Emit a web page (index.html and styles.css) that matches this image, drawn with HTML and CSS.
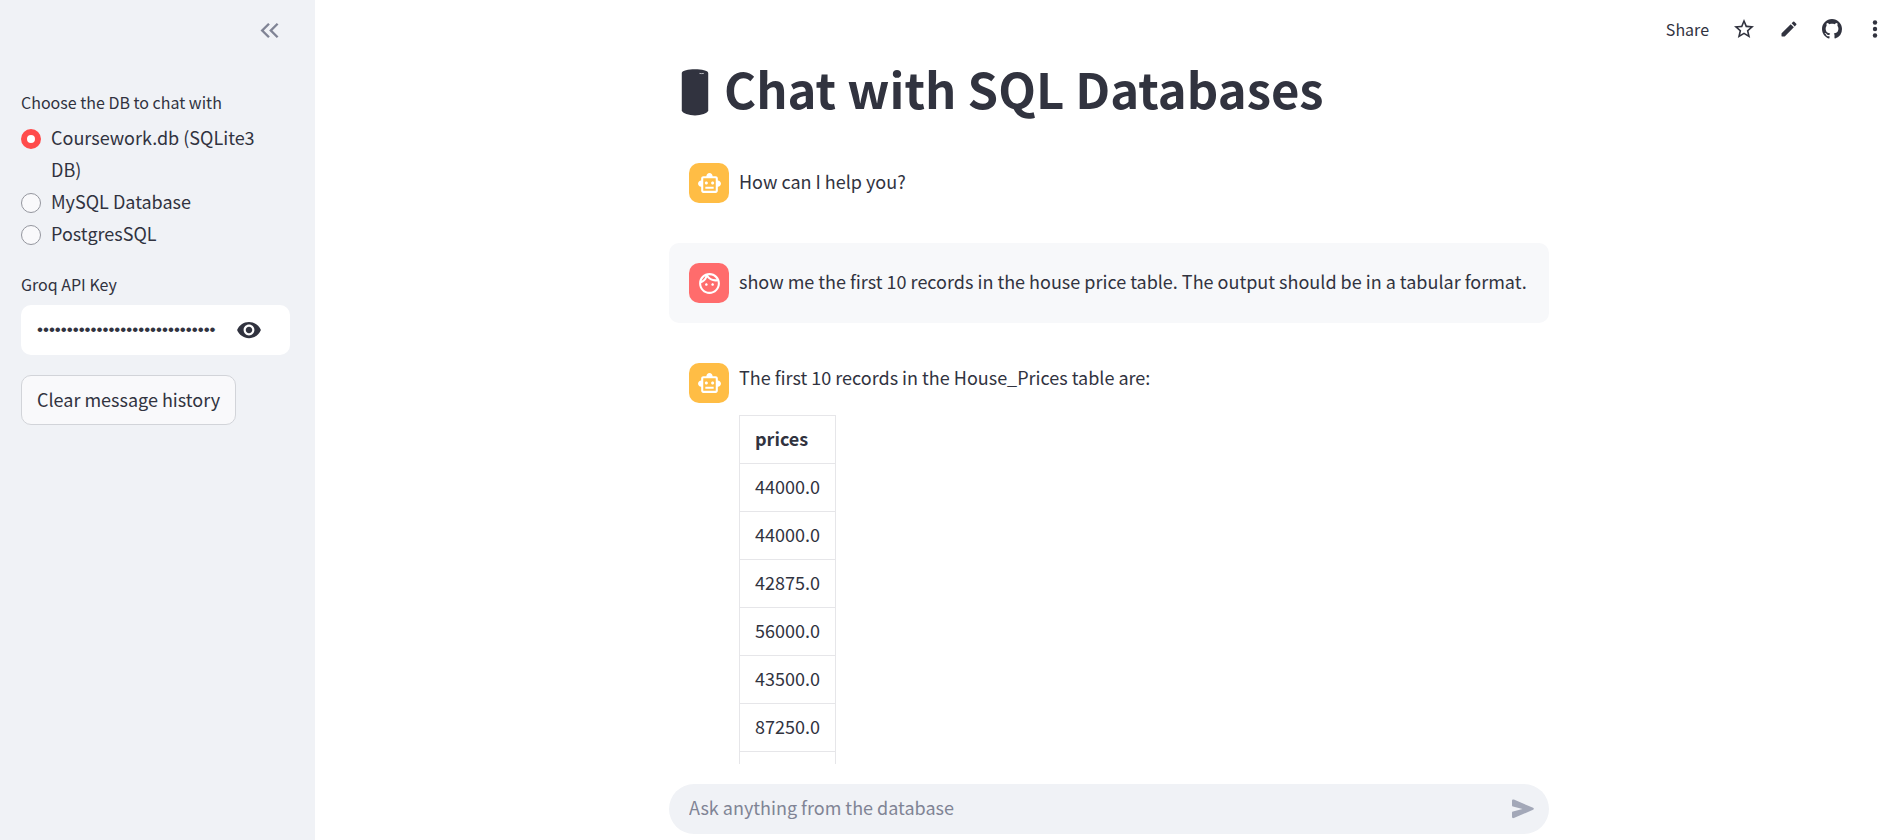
FILE: index.html
```
<!DOCTYPE html>
<html lang="en">
<head>
<meta charset="utf-8">
<title>Chat with SQL Databases</title>
<link rel="stylesheet" href="styles.css">
</head>
<body>
<aside class="sidebar">
  <div class="sidebar-top">
    <button class="icon-button collapse" type="button" aria-label="Collapse sidebar">
      <svg width="25" height="25" viewBox="0 0 24 24" fill="none" stroke="currentColor" stroke-width="2.300"><path d="M11.500 5.500 5 12l6.500 6.500M19.800 5.500 13.300 12l6.500 6.500"/></svg>
    </button>
  </div>
  <fieldset class="radio-group">
    <legend class="label">Choose the DB to chat with</legend>
    <label class="option"><input class="radio" type="radio" name="db" checked><span>Coursework.db (SQLite3 DB)</span></label>
    <label class="option"><input class="radio" type="radio" name="db"><span>MySQL Database</span></label>
    <label class="option"><input class="radio" type="radio" name="db"><span>PostgresSQL</span></label>
  </fieldset>
  <div class="field">
    <label class="label" for="api-key">Groq API Key</label>
    <div class="password-box">
      <input class="password" id="api-key" type="password" value="0000000000000000000000000000000000000000">
      <button class="icon-button" type="button" aria-label="Show password">
        <svg width="26" height="26" viewBox="0 0 24 24" fill="currentColor"><path d="M12 4.500C7 4.500 2.730 7.610 1 12c1.730 4.390 6 7.500 11 7.500s9.270-3.110 11-7.500c-1.730-4.390-6-7.500-11-7.500zM12 17c-2.760 0-5-2.240-5-5s2.240-5 5-5 5 2.240 5 5-2.240 5-5 5zm0-8c-1.660 0-3 1.340-3 3s1.340 3 3 3 3-1.340 3-3-1.340-3-3-3z"/></svg>
      </button>
    </div>
  </div>
  <button class="clear-button" type="button">Clear message history</button>
</aside>

<main class="main">
  <header class="toolbar">
    <button class="share" type="button">Share</button>
    <button class="icon-button" type="button" aria-label="Favorite">
      <svg width="24" height="24" viewBox="0 0 24 24" fill="currentColor"><path d="M22 9.240l-7.190-.620L12 2 9.190 8.630 2 9.240l5.460 4.730L5.820 21 12 17.270 18.180 21l-1.630-7.030L22 9.240zM12 15.400l-3.760 2.270 1-4.280-3.320-2.880 4.380-.380L12 6.100l1.710 4.040 4.380.380-3.320 2.880 1 4.280L12 15.400z"/></svg>
    </button>
    <button class="icon-button" type="button" aria-label="Edit">
      <svg width="20" height="20" viewBox="0 0 24 24" fill="currentColor"><path d="M3 17.460v3.040c0 .28.220.5.500.5h3.040c.13 0 .26-.05.350-.15L17.810 9.940l-3.750-3.750L3.150 17.100c-.1.100-.15.220-.15.360zM20.710 7.040a1 1 0 0 0 0-1.410l-2.340-2.340a1 1 0 0 0-1.410 0l-1.830 1.830 3.750 3.750 1.830-1.830z"/></svg>
    </button>
    <button class="icon-button" type="button" aria-label="View on GitHub">
      <svg width="20" height="20" viewBox="0 0 16 16" fill="currentColor"><path d="M8 0C3.580 0 0 3.580 0 8c0 3.540 2.290 6.530 5.470 7.590.4.070.55-.17.55-.38 0-.19-.01-.82-.01-1.490-2.010.37-2.530-.49-2.690-.94-.09-.23-.48-.94-.82-1.130-.28-.15-.68-.52-.01-.53.63-.01 1.080.58 1.230.82.720 1.210 1.870.87 2.330.66.070-.52.280-.87.510-1.070-1.780-.2-3.640-.89-3.640-3.950 0-.87.310-1.590.82-2.150-.08-.2-.36-1.020.08-2.120 0 0 .67-.21 2.200.82.640-.18 1.320-.27 2-.27s1.360.09 2 .27c1.530-1.040 2.200-.82 2.200-.82.440 1.100.16 1.920.08 2.120.51.560.82 1.270.82 2.150 0 3.070-1.870 3.750-3.650 3.950.29.250.54.730.54 1.480 0 1.070-.01 1.930-.01 2.200 0 .21.150.46.550.38A8.010 8.010 0 0 0 16 8c0-4.420-3.580-8-8-8z"/></svg>
    </button>
    <button class="icon-button" type="button" aria-label="More options">
      <svg width="20" height="20" viewBox="0 0 20 20" fill="currentColor"><circle cx="10" cy="3.500" r="2.200"/><circle cx="10" cy="10" r="2.200"/><circle cx="10" cy="16.500" r="2.200"/></svg>
    </button>
  </header>

  <div class="scroll">
    <div class="column">
      <h1 class="title">
        <svg width="28" height="47" viewBox="0 0 28 48"><path fill="currentColor" d="M.5 4C1 1.500 7 .3 14 .3S27 1.500 27.500 4v38.500C27 45.500 20 47.500 14 47.500S1 45.500.5 42.500z"/><path d="M18.500 4.500q2.500.4 4.500 0" fill="none" stroke="#b9bac0"/></svg>
        <span>Chat with SQL Databases</span>
      </h1>

      <article class="message">
        <div class="avatar bot">
          <svg width="25" height="25" viewBox="0 0 24 24" fill="currentColor"><path d="M20 9V7c0-1.100-.9-2-2-2h-3c0-1.660-1.340-3-3-3S9 3.340 9 5H6c-1.100 0-2 .9-2 2v2c-1.660 0-3 1.340-3 3s1.340 3 3 3v4c0 1.100.9 2 2 2h12c1.100 0 2-.9 2-2v-4c1.660 0 3-1.340 3-3s-1.340-3-3-3zm-2 10H6V7h12v12zm-9-6c-.83 0-1.500-.67-1.500-1.500S8.170 10 9 10s1.500.67 1.500 1.500S9.830 13 9 13zm7.500-1.500c0 .83-.67 1.500-1.500 1.500s-1.500-.67-1.500-1.500.67-1.500 1.500-1.500 1.500.67 1.500 1.500zM8 15h8v2H8v-2z"/></svg>
        </div>
        <div class="content"><p>How can I help you?</p></div>
      </article>

      <article class="message user-message">
        <div class="avatar user">
          <svg width="25" height="25" viewBox="0 0 24 24" fill="currentColor"><path d="M10.250 13c0 .69-.56 1.250-1.250 1.250S7.750 13.690 7.750 13s.56-1.250 1.250-1.250 1.250.56 1.250 1.250zM15 11.750c-.69 0-1.250.56-1.250 1.250s.56 1.250 1.250 1.250 1.250-.56 1.250-1.250-.56-1.250-1.250-1.250zm7 .25c0 5.520-4.480 10-10 10S2 17.520 2 12 6.480 2 12 2s10 4.480 10 10zM10.660 4.120C12.060 6.440 14.600 8 17.500 8c.46 0 .91-.05 1.340-.12C17.440 5.560 14.900 4 12 4c-.46 0-.91.05-1.340.12zM4.420 9.470c1.710-.97 3.030-2.550 3.660-4.440C6.370 6 5.050 7.580 4.420 9.470zM20 12c0-.78-.12-1.530-.33-2.240-.7.150-1.420.24-2.170.24-3.130 0-5.920-1.440-7.760-3.690C8.690 8.870 6.600 10.880 4 11.860c.01.04 0 .09 0 .14 0 4.410 3.590 8 8 8s8-3.590 8-8z"/></svg>
        </div>
        <div class="content"><p>show me the first 10 records in the house price table. The output should be in a tabular format.</p></div>
      </article>

      <article class="message">
        <div class="avatar bot">
          <svg width="25" height="25" viewBox="0 0 24 24" fill="currentColor"><path d="M20 9V7c0-1.100-.9-2-2-2h-3c0-1.660-1.340-3-3-3S9 3.340 9 5H6c-1.100 0-2 .9-2 2v2c-1.660 0-3 1.340-3 3s1.340 3 3 3v4c0 1.100.9 2 2 2h12c1.100 0 2-.9 2-2v-4c1.660 0 3-1.340 3-3s-1.340-3-3-3zm-2 10H6V7h12v12zm-9-6c-.83 0-1.500-.67-1.500-1.500S8.170 10 9 10s1.500.67 1.500 1.500S9.830 13 9 13zm7.500-1.500c0 .83-.67 1.500-1.500 1.500s-1.500-.67-1.500-1.500.67-1.500 1.500-1.500 1.500.67 1.500 1.500zM8 15h8v2H8v-2z"/></svg>
        </div>
        <div class="content">
          <p>The first 10 records in the House_Prices table are:</p>
          <table class="prices">
            <thead><tr><th scope="col">prices</th></tr></thead>
            <tbody>
              <tr><td>44000.0</td></tr>
              <tr><td>44000.0</td></tr>
              <tr><td>42875.0</td></tr>
              <tr><td>56000.0</td></tr>
              <tr><td>43500.0</td></tr>
              <tr><td>87250.0</td></tr>
              <tr><td></td></tr>
            </tbody>
          </table>
        </div>
      </article>
    </div>
  </div>

  <footer class="composer">
    <form class="column chat-form">
      <input class="chat-input" type="text" placeholder="Ask anything from the database" aria-label="Chat message">
      <button class="icon-button send" type="button" aria-label="Send">
        <svg width="24" height="24" viewBox="0 0 24 24" fill="currentColor"><path d="M1 3.800c0-1.200.9-1.600 1.900-1.200l19.200 8.200c1 .5 1 1.500 0 2l-19.200 8.200c-1 .4-1.900 0-1.900-1.200v-4.300c0-.6.4-1 1-1.100L11.500 12 2 9.500c-.6-.1-1-.5-1-1.100z"/></svg>
      </button>
    </form>
  </footer>
</main>
</body>
</html>
```
FILE: styles.css
```
* { box-sizing: border-box; }

body {
  margin: 0;
  height: 100vh;
  display: flex;
  overflow: hidden;
  background: #fff;
  color: #31333f;
  font: 18px/32px "Noto Sans CJK SC", "Noto Sans", sans-serif;
}

button, input { font: inherit; color: inherit; }
svg { display: block; flex: none; }
p { margin: 0; }

.icon-button {
  display: flex;
  padding: 0;
  border: 0;
  background: none;
  cursor: pointer;
}

/* Sidebar */
.sidebar {
  flex: none;
  width: 315px;
  padding: 0 25px 20px 21px;
  background: #f0f2f6;
}
.sidebar-top {
  display: flex;
  justify-content: flex-end;
  align-items: center;
  height: 60px;
  margin-bottom: 28px;
  padding-right: 8px;
}
.collapse { color: #808495; }
.label {
  display: block;
  padding: 0;
  font-size: 16px;
  line-height: 28px;
}
.radio-group {
  margin: 0 0 21px;
  padding: 0 15px 0 0;
  border: 0;
}
.radio-group .label { margin-bottom: 5px; }
.option {
  display: flex;
  align-items: flex-start;
  gap: 10px;
}
.radio {
  appearance: none;
  flex: none;
  width: 20px;
  height: 20px;
  margin: 8px 0 0;
  border: 1px solid #94969e;
  border-radius: 50%;
  background: #f9f9fb;
}
.radio:checked {
  border: 6px solid #ff4b4b;
  background: #fff;
}
.field { margin-bottom: 20px; }
.field .label { margin-bottom: 7px; }
.password-box {
  display: flex;
  align-items: center;
  gap: 20px;
  height: 50px;
  padding: 0 28px 0 16px;
  border-radius: 10px;
  background: #fff;
}
.password {
  flex: 1;
  min-width: 0;
  padding: 0;
  border: 0;
  outline: 0;
  background: none;
  font-family: "Liberation Sans", sans-serif;
  font-size: 17px;
}
.clear-button {
  height: 50px;
  padding: 0 15px 2px;
  border: 1px solid #d2d4d9;
  border-radius: 10px;
  background: #f9f9fb;
}

/* Main area */
.main {
  flex: 1;
  min-width: 0;
  display: flex;
  flex-direction: column;
}
.toolbar {
  flex: none;
  display: flex;
  justify-content: flex-end;
  align-items: center;
  gap: 23px;
  height: 50px;
  padding: 8px 12px 0 0;
}
.share {
  padding: 0;
  border: 0;
  background: none;
  font-size: 16px;
}
.scroll {
  flex: 1;
  min-height: 0;
  overflow: hidden;
  padding-left: 6px;
}
.column {
  width: 100%;
  max-width: 880px;
  margin: 0 auto;
}
.title {
  display: flex;
  align-items: center;
  gap: 15px;
  margin: 0 0 21px;
  padding: 12px 0 0 12px;
  font-size: 49px;
  line-height: 52px;
}
.title span { padding-bottom: 8px; }
.message {
  display: flex;
  gap: 10px;
  margin-bottom: 20px;
  padding: 20px;
  border-radius: 10px;
}
.user-message { background: #f7f8fa; }
.avatar {
  flex: none;
  display: flex;
  align-items: center;
  justify-content: center;
  width: 40px;
  height: 40px;
  border-radius: 10px;
  color: #fff;
}
.bot { background: #ffbd45; }
.user { background: #ff6c6c; }
.content {
  flex: 1;
  min-width: 0;
}
.content p {
  padding-bottom: 3px;
  line-height: 29px;
}
.content p:only-child { line-height: 37px; }
.prices {
  margin-top: 20px;
  border-collapse: collapse;
}
.prices th, .prices td {
  height: 48px;
  padding: 0 15px 3px;
  border: 1px solid #e6e6e9;
  text-align: left;
}

/* Chat input */
.composer {
  flex: none;
  padding: 20px 0 6px 6px;
}
.chat-form {
  display: flex;
  align-items: center;
  height: 50px;
  padding: 0 14px 0 20px;
  border-radius: 25px;
  background: #f0f2f6;
}
.chat-input {
  flex: 1;
  min-width: 0;
  padding: 0 0 4px;
  border: 0;
  outline: 0;
  background: none;
}
.chat-input::placeholder { color: #808495; opacity: 1; }
.send { color: #a3a8b8; }
```
